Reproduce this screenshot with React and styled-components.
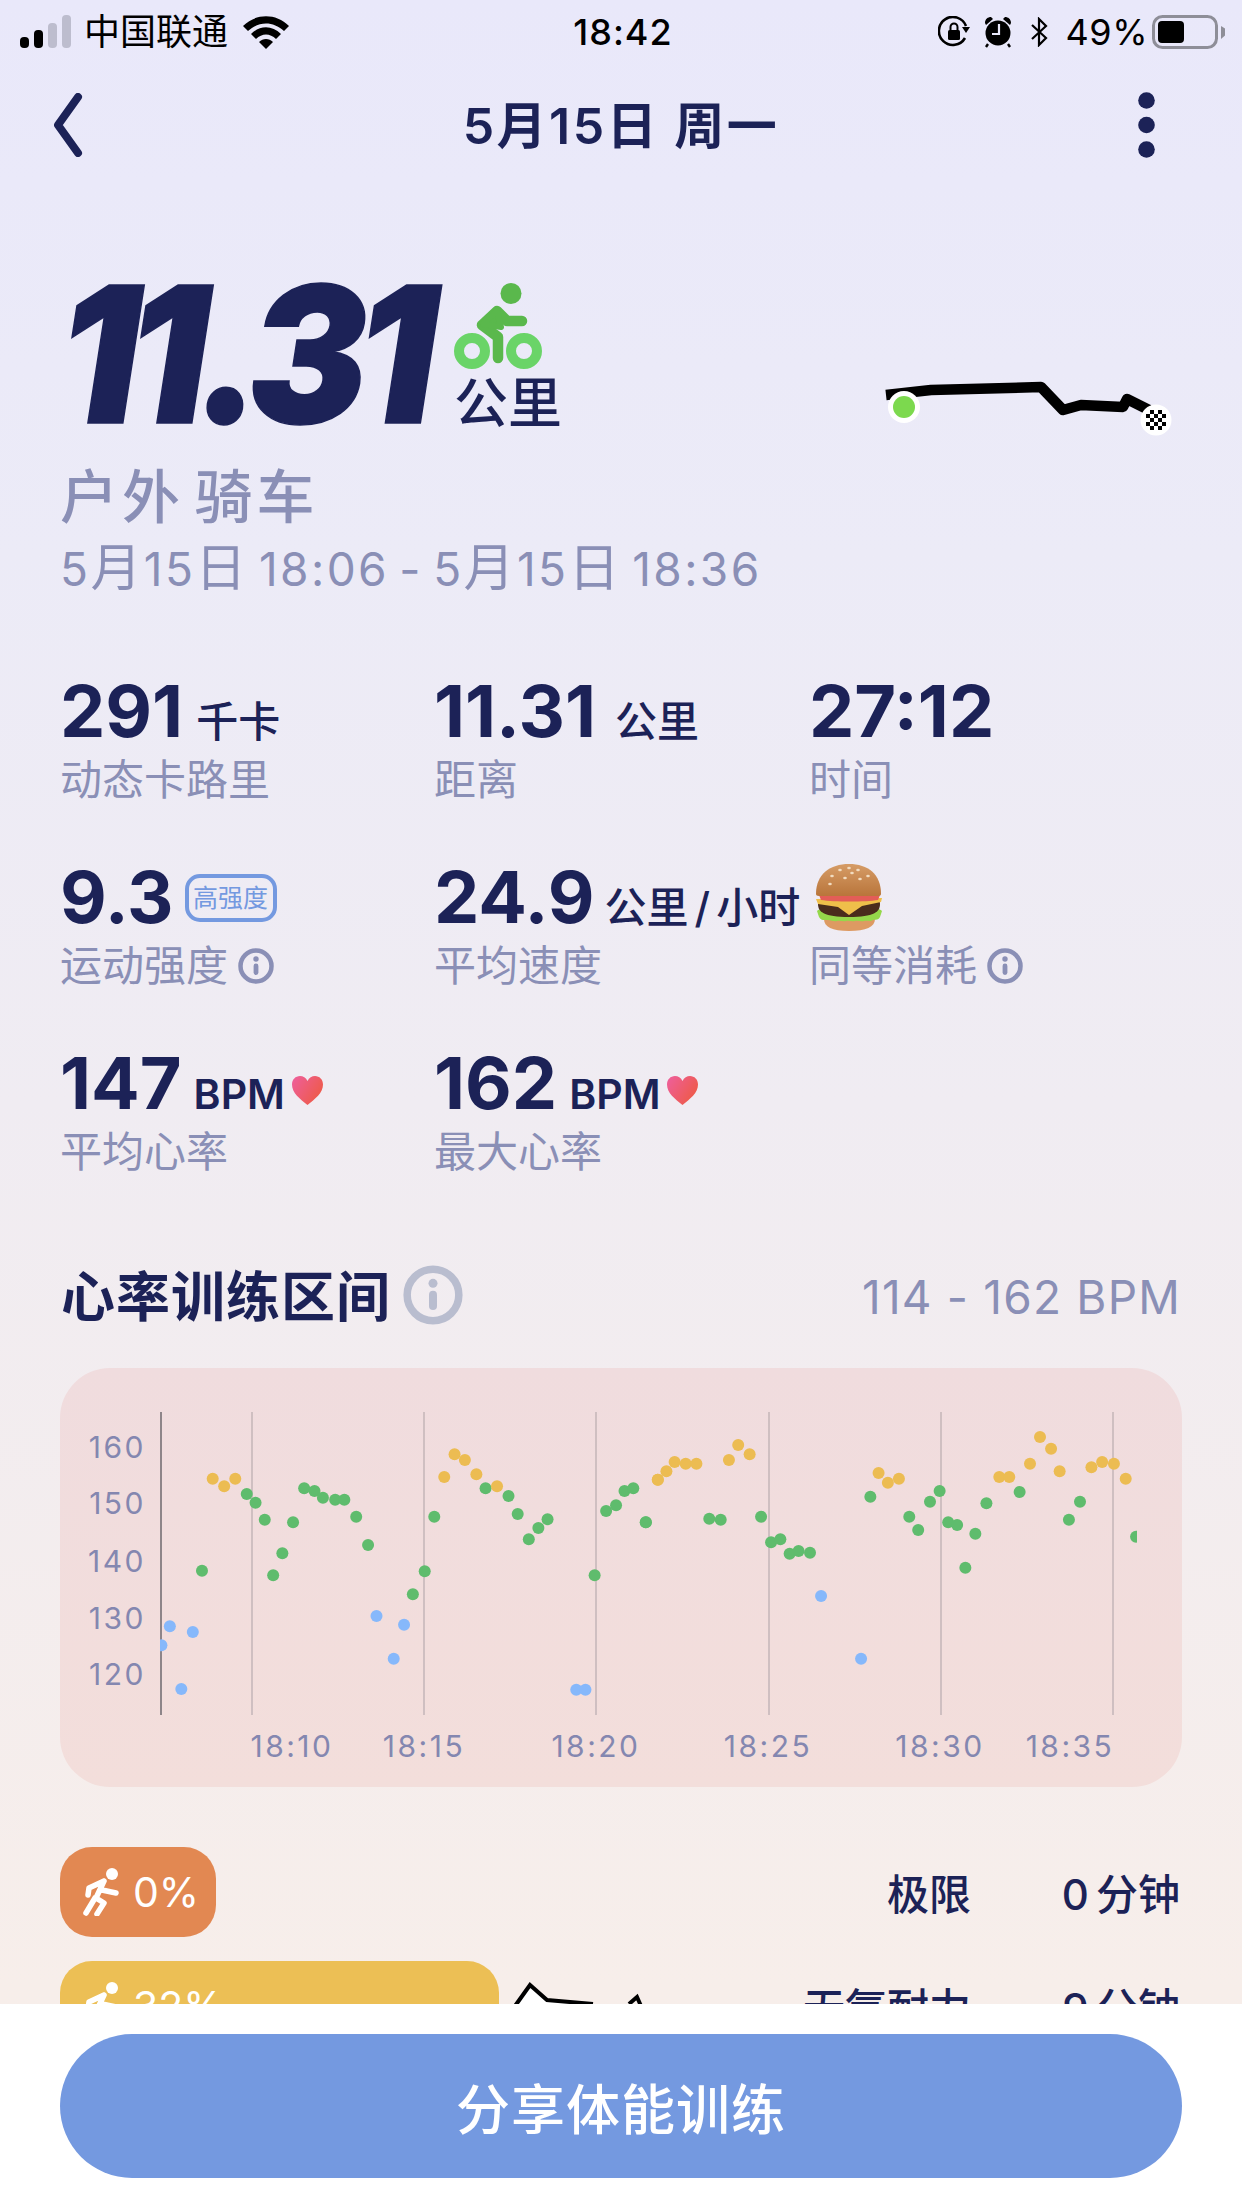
import React from "react";
import styled, { createGlobalStyle } from "styled-components";

const NAVY = "#1c2257";
const MUTED = "#8a8fb6";
const SANS = `Inter, "Noto Sans CJK SC", sans-serif`;

const Global = createGlobalStyle`
  html, body { margin: 0; padding: 0; background: #fff; }
  * { box-sizing: border-box; }
  body { font-family: ${SANS}; }
`;

const Page = styled.div`
  position: relative;
  width: 1242px;
  height: 2208px;
  overflow: hidden;
  background: linear-gradient(180deg, #e9e8fa 0%, #ecebf7 25%, #f0ecf2 50%, #f7eeea 90%);
`;

/* status bar */
const StatusBar = styled.div`
  display: grid;
  grid-template-columns: 1fr auto 1fr;
  align-items: center;
  height: 64px;
  padding: 0 16px 0 20px;
  color: #000;
  font-size: 36px;
  line-height: 64px;
`;
const StatusLeft = styled.div`
  display: flex;
  align-items: center;
  gap: 12px;
`;
const StatusRight = styled.div`
  display: flex;
  align-items: center;
  justify-content: flex-end;
  gap: 18px;
`;
const StatusTime = styled.div`
  font-weight: 500;
  font-size: 36px;
  letter-spacing: 1px;
`;
const Carrier = styled.span`
  font-size: 36px;
  margin-right: 2px;
`;
const Percent = styled.span`
  letter-spacing: 0.5px;
`;
const LockIcon = styled.svg`
  margin-right: -4px;
`;
const BatteryIcon = styled.svg`
  margin-left: -14px;
`;

/* nav */
const NavBar = styled.div`
  display: flex;
  align-items: center;
  justify-content: space-between;
  height: 122px;
  padding: 0 87px 0 47px;
`;
const NavTitle = styled.div`
  margin: -6px 0 0 21px;
  font-size: 50px;
  font-weight: 600;
  letter-spacing: 2.5px;
  color: ${NAVY};
`;

/* hero */
const Hero = styled.div`
  display: flex;
  align-items: flex-end;
  height: 172px;
  margin-top: 82px;
  padding-left: 59px;
`;
const BigNumber = styled.div`
  width: 380px;
  font-size: 190px;
  line-height: 172px;
  font-weight: 900;
  font-style: italic;
  letter-spacing: -12px;
  white-space: nowrap;
  color: ${NAVY};
  -webkit-text-stroke: 1.5px ${NAVY};
  transform: scaleX(0.935);
  transform-origin: left center;
`;
const HeroUnit = styled.div`
  display: flex;
  flex-direction: column;
  margin: 0 0 7px 15px;
`;
const HeroUnitText = styled.div`
  margin-top: 6px;
  font-size: 54px;
  line-height: 58px;
  font-weight: 500;
  color: ${NAVY};
`;
const Route = styled.svg`
  margin-left: auto;
  margin-right: 65px;
  margin-bottom: -2px;
  overflow: visible;
`;
const ActivityName = styled.div`
  margin: 19px 0 0 60px;
  font-size: 58px;
  line-height: 76px;
  font-weight: 500;
  letter-spacing: 4px;
  word-spacing: -9px;
  color: ${MUTED};
`;
const ActivityTime = styled.div`
  margin: 3px 0 0 60px;
  font-size: 46px;
  line-height: 60px;
  letter-spacing: 2.4px;
  word-spacing: -5px;
  color: ${MUTED};
`;
const DateGlyph = styled.span`
  font-size: 51px;
`;

/* stats */
const StatGrid = styled.div`
  display: grid;
  grid-template-columns: 374px 375px 1fr;
  grid-auto-rows: 186px;
  margin-top: 77px;
  padding-left: 60px;
`;
const Stat = styled.div`
  display: flex;
  flex-direction: column;
`;
const StatValue = styled.div`
  display: flex;
  align-items: baseline;
  height: 70px;
  line-height: 70px;
  font-size: 72px;
  font-weight: 700;
  color: ${NAVY};
  white-space: nowrap;
`;
const StatUnit = styled.span`
  margin-left: ${(p) => p.$gap ?? 13}px;
  font-size: ${(p) => p.$size ?? 42}px;
  font-weight: ${(p) => p.$weight ?? 500};
  word-spacing: -5px;
`;
const StatLabel = styled.div`
  display: flex;
  align-items: center;
  gap: 10px;
  height: 50px;
  margin-top: 9px;
  font-size: 42px;
  line-height: 50px;
  color: ${MUTED};
`;
const Badge = styled.span`
  align-self: center;
  display: inline-flex;
  align-items: center;
  justify-content: center;
  width: 92px;
  height: 48px;
  margin: 2px 0 0 11px;
  border: 4px solid #7499e0;
  border-radius: 15px;
  font-size: 25px;
  line-height: 1;
  font-weight: 400;
  color: #7499e0;
`;
const HeartIcon = styled.svg`
  align-self: center;
  margin: 14px 0 0 7px;
`;
const Burger = styled.svg`
  align-self: flex-start;
  margin: 2px 0 0 7px;
`;

/* section */
const SectionHead = styled.div`
  display: flex;
  align-items: center;
  height: 60px;
  margin-top: 31px;
  padding: 0 61px 0 61px;
`;
const SectionTitle = styled.div`
  margin-top: -3px;
  font-size: 54px;
  font-weight: 600;
  letter-spacing: 1px;
  color: ${NAVY};
`;
const SectionRange = styled.div`
  margin: 3px 0 0 auto;
  font-size: 46px;
  letter-spacing: 1.2px;
  color: ${MUTED};
`;
const SectionInfo = styled.span`
  display: flex;
  margin-left: 12px;
`;
const ChartCard = styled.div`
  height: 419px;
  margin: 43px 60px 0;
  border-radius: 50px;
  overflow: hidden;
  background: linear-gradient(180deg, #f0dcde 0%, #f3dedb 100%);
`;
const ChartSvg = styled.svg`
  display: block;
`;
const ChartText = styled.text`
  font-family: ${SANS};
  font-size: 30px;
  letter-spacing: 2.5px;
  fill: #8487b0;
`;

/* zones */
const ZoneList = styled.div`
  display: flex;
  flex-direction: column;
  gap: 24px;
  margin-top: 60px;
`;
const ZoneRow = styled.div`
  display: flex;
  align-items: center;
  height: 90px;
  padding: 0 62px 0 60px;
`;
const ZoneBar = styled.div`
  display: flex;
  align-items: center;
  gap: 12px;
  height: 90px;
  padding-left: 23px;
  border-radius: 32px;
  font-size: 41px;
  color: #fff;
  background: ${(p) => p.$color};
`;
const ZoneSketch = styled.svg`
  align-self: flex-start;
  margin: 1px 0 0 15px;
  overflow: visible;
`;
const ZoneName = styled.div`
  margin: -2px 0 0 auto;
  font-size: 42px;
  font-weight: 500;
  color: ${NAVY};
`;
const ZoneTime = styled.div`
  width: 209px;
  margin-top: -2px;
  text-align: right;
  font-size: 42px;
  font-weight: 500;
  word-spacing: -4px;
  color: ${NAVY};
`;

/* footer */
const Footer = styled.div`
  position: absolute;
  left: 0;
  right: 0;
  bottom: 0;
  height: 204px;
  padding: 30px 60px 0;
  background: #fff;
`;
const ShareButton = styled.button`
  display: block;
  width: 1122px;
  height: 144px;
  border: 0;
  border-radius: 72px;
  font-family: ${SANS};
  font-size: 54px;
  font-weight: 500;
  letter-spacing: 1px;
  color: #fff;
  background: #7499e0;
`;

/* icons */
const Signal = () => (
  <svg width="52" height="34" viewBox="0 0 52 34">
    <rect x="0" y="22" width="9" height="11" rx="4" fill="#000" />
    <rect x="14" y="15" width="9" height="18" rx="4" fill="#000" />
    <rect x="28" y="8" width="9" height="25" rx="4" fill="#bdbdce" />
    <rect x="42" y="0" width="9" height="33" rx="4" fill="#bdbdce" />
  </svg>
);
const Wifi = () => (
  <svg width="48" height="34" viewBox="0 0 48 34">
    <path d="M1 11C14 -2 34 -2 47 11L42 16C31 6 17 6 6 16Z" fill="#000" />
    <path d="M9 19C18 10 30 10 39 19L34 24C28 18 20 18 14 24Z" fill="#000" />
    <path d="M17 27C21 23 27 23 31 27L24 34Z" fill="#000" />
  </svg>
);
const RotationLock = () => (
  <LockIcon width="32" height="32" viewBox="0 0 32 32">
    <path d="M27 22A14 14 0 1 1 28 10" fill="none" stroke="#000" strokeWidth="2.6" />
    <path d="M24 11H32L28 17Z" fill="#000" />
    <rect x="10" y="14" width="12" height="10" rx="1.5" fill="#000" />
    <path d="M12.5 14V11A3.5 3.5 0 0 1 19.5 11V14" fill="none" stroke="#000" strokeWidth="2" />
  </LockIcon>
);
const Alarm = () => (
  <svg width="28" height="32" viewBox="0 0 28 32">
    <circle cx="14" cy="17" r="12.5" fill="#000" />
    <path d="M1 7C1 3 4 1 7 1L9 3L2 9Z M27 7C27 3 24 1 21 1L19 3L26 9Z" fill="#000" />
    <path d="M4 28L2 31M24 28L26 31" stroke="#000" strokeWidth="2.4" />
    <path d="M15 8V18H8" fill="none" stroke="#e9e8fa" strokeWidth="2.2" />
  </svg>
);
const Bluetooth = () => (
  <svg width="18" height="30" viewBox="0 0 18 30">
    <path d="M2 8L16 21L9 28V2L16 9L2 22" fill="none" stroke="#000" strokeWidth="2.2" />
  </svg>
);
const Battery = () => (
  <BatteryIcon width="74" height="34" viewBox="0 0 74 34">
    <rect x="1.5" y="1.5" width="63" height="31" rx="9" fill="none" stroke="#8e8e98" strokeWidth="3" />
    <rect x="6" y="6" width="26" height="22" rx="4" fill="#000" />
    <path d="M69 11L73 13.5V20.5L69 24Z" fill="#8e8e98" />
  </BatteryIcon>
);
const Chevron = () => (
  <svg width="36" height="64" viewBox="0 0 36 64">
    <path d="M31 4L11 32L31 60" fill="none" stroke={NAVY} strokeWidth="8" strokeLinecap="round" strokeLinejoin="round" />
  </svg>
);
const Dots = () => (
  <svg width="17" height="66" viewBox="0 0 17 66">
    <circle cx="8.5" cy="8.5" r="8.3" fill={NAVY} />
    <circle cx="8.5" cy="33" r="8.3" fill={NAVY} />
    <circle cx="8.5" cy="57.5" r="8.3" fill={NAVY} />
  </svg>
);
const Cyclist = () => (
  <svg width="88" height="86" viewBox="0 0 88 86" style={{ display: "block" }}>
    <circle cx="57" cy="10.5" r="10.5" fill="#5ab84c" />
    <circle cx="18" cy="68" r="13" fill="none" stroke="#6ad468" strokeWidth="10" />
    <circle cx="70" cy="68" r="13" fill="none" stroke="#6ad468" strokeWidth="10" />
    <path d="M44 75V54L28 42L43 28L53 38H68" fill="none" stroke="#5ab84c" strokeWidth="10.5" strokeLinecap="round" strokeLinejoin="round" />
    <path d="M29 41L43 28L47 44Z" fill="#5ab84c" stroke="#5ab84c" strokeWidth="6" strokeLinejoin="round" />
  </svg>
);
const RouteMap = () => (
  <Route width="296" height="60" viewBox="880 380 296 60">
    <path d="M885 393L930 388L1040 385L1062 408L1080 403L1122 405L1126 397L1148 408" fill="none" stroke="#000" strokeWidth="10.5" strokeLinejoin="round" />
    <circle cx="903" cy="405" r="16" fill="#fff" />
    <circle cx="903" cy="405" r="11" fill="#7cd94e" />
    <circle cx="1155" cy="418" r="15.5" fill="#fff" />
    {[[-8,-4],[-8,4],[-4,-8],[-4,0],[-4,8],[0,-4],[0,4],[4,-8],[4,0],[4,8],[8,-4],[8,4]].map(([x, y]) => (
      <rect key={`${x}${y}`} x={1153 + x} y={416 + y} width="4" height="4" fill="#000" />
    ))}
  </Route>
);
const Info = ({ size = 36, color = MUTED }) => (
  <svg width={size} height={size} viewBox="0 0 36 36">
    <circle cx="18" cy="18" r="15.5" fill="none" stroke={color} strokeWidth="4.5" />
    <circle cx="18" cy="11" r="2.7" fill={color} />
    <rect x="15.6" y="15.5" width="4.8" height="11.5" rx="2.4" fill={color} />
  </svg>
);
const Heart = ({ id }) => (
  <HeartIcon width="31" height="29" viewBox="0 0 31 29">
    <defs>
      <linearGradient id={id} x1="0" y1="0" x2="1" y2="0.6">
        <stop offset="0" stopColor="#ee5f9e" />
        <stop offset="1" stopColor="#ee5a48" />
      </linearGradient>
    </defs>
    <path d="M15.5 29C8 23 0 17 0 8.5C0 3.5 3.5 0 8 0C11 0 14 1.5 15.5 5C17 1.5 20 0 23 0C27.5 0 31 3.5 31 8.5C31 17 23 23 15.5 29Z" fill={`url(#${id})`} />
  </HeartIcon>
);
const BurgerIcon = () => (
  <Burger width="67" height="67" viewBox="0 0 67 67">
    <defs>
      <linearGradient id="bun" x1="0" y1="0" x2="0" y2="1">
        <stop offset="0" stopColor="#d69c66" />
        <stop offset="1" stopColor="#b9753b" />
      </linearGradient>
    </defs>
    <path d="M8 55C8 63 16 67 33 67C50 67 59 63 59 55Z" fill="#dd9a62" />
    <path d="M1 47C3 45 5 45 8 46H59C62 45 64 45 66 47L64 53C62 57 60 55 57 56C54 58 51 56 48 57C45 58 42 56 39 57C36 58 33 56 30 57C27 58 24 56 21 57C18 58 15 56 12 56C8 56 5 57 3 53Z" fill="#95d84a" />
    <path d="M2 40C2 34 8 34 33 34C58 34 64 34 64 40C64 48 58 53 33 53C8 53 2 48 2 40Z" fill="#4a2c1c" />
    <path d="M0 35L66 34L65 38L46 42L33 51L22 43L2 40Z" fill="#efbf4a" />
    <path d="M3 31H64L62 36C50 38 18 38 5 36Z" fill="#e35d57" />
    <path d="M0 30C0 10 14 0 33 0C52 0 65 10 65 30C65 31 64 32 62 32H3C1 32 0 31 0 30Z" fill="url(#bun)" />
    {[[16,12],[24,6],[33,4],[42,6],[52,12],[29,14],[44,15],[14,20],[36,9]].map(([x, y]) => (
      <ellipse key={`${x}-${y}`} cx={x} cy={y} rx="1.8" ry="1.2" fill="#f1dcc0" />
    ))}
  </Burger>
);
const Runner = ({ width = 38, height = 48 }) => (
  <svg width={width} height={height} viewBox="0 0 38 48">
    <circle cx="29" cy="6" r="6" fill="#fff" />
    <path d="M21 13L6 20L5 27M21 13L13 30L21 35L14 46M19 22L33 25M12 30L3 45" fill="none" stroke="#fff" strokeWidth="5.5" strokeLinecap="round" strokeLinejoin="round" />
  </svg>
);

/* chart data, in the picture's pixel coordinates */
const fromLeft = (pts) => pts.map(([x, y]) => [60 + x / 2.613, 1370 + y / 3]);
const fromRight = (pts) => pts.map(([x, y]) => [640 + x / 2.8, 1370 + y / 3]);
const BLUE = [
  ...fromLeft([[265,829],[287,772],[317,960],[347,789],[827,741],[872,869],[899,767],[1349,962],[1373,962]]),
  ...fromRight([[507,681],[619,869]]),
];
const GREEN = [
  ...fromLeft([[371,605],[488,375],[511,401],[535,452],[557,619],[581,553],[609,460],[638,358],[665,366],[687,386],[719,392],[743,392],[774,443],[805,528],[922,676],[953,607],[978,443],[1112,358],[1172,381],[1196,435],[1225,511],[1250,477],[1274,451],[1397,619],[1427,426],[1453,409],[1475,366],[1498,358],[1531,460]]),
  ...fromRight([[16,460],[194,449],[226,452],[339,443],[367,520],[393,511],[419,554],[444,546],[476,551],[645,383],[754,443],[779,483],[812,398],[839,366],[863,460],[888,468],[911,596],[939,494],[970,403],[1063,369],[1201,452],[1232,398],[1389,503]]),
];
const YELLOW = [
  ...fromLeft([[399,329],[429,352],[458,329],[1004,324],[1031,256],[1058,273],[1088,316],[1142,352],[1562,332]]),
  ...fromRight([[50,332],[74,307],[97,279],[128,284],[158,284],[249,273],[275,228],[307,256],[668,312],[694,341],[725,329],[1006,324],[1034,324],[1092,284],[1120,204],[1151,239],[1175,307],[1264,295],[1294,279],[1327,284],[1360,329]]),
];
const GRID = [252, 424, 596, 769, 941, 1113];
const Y_LABELS = [["160", 1447], ["150", 1503], ["140", 1561], ["130", 1618], ["120", 1674]];
const X_LABELS = [["18:10", 292], ["18:15", 424], ["18:20", 596], ["18:25", 768], ["18:30", 940], ["18:35", 1070]];

const Chart = () => (
  <ChartSvg width="1122" height="419" viewBox="60 1369 1122 419">
    <defs>
      <clipPath id="plot">
        <rect x="160" y="1400" width="977" height="330" />
      </clipPath>
    </defs>
    <line x1="161" x2="161" y1="1413" y2="1716" stroke="#8e8589" strokeWidth="2" />
    {GRID.map((x) => (
      <line key={x} x1={x} x2={x} y1="1413" y2="1716" stroke="#cfbfc1" strokeWidth="2" />
    ))}
    <g clipPath="url(#plot)">
      {BLUE.map(([x, y], i) => <circle key={i} cx={x} cy={y} r="6" fill="#86b8fb" />)}
      {GREEN.map(([x, y], i) => <circle key={i} cx={x} cy={y} r="6" fill="#5fbc6d" />)}
      {YELLOW.map(([x, y], i) => <circle key={i} cx={x} cy={y} r="6" fill="#ecbc52" />)}
    </g>
    {Y_LABELS.map(([t, y]) => (
      <ChartText key={t} x="146" y={y + 12} textAnchor="end">{t}</ChartText>
    ))}
    {X_LABELS.map(([t, x]) => (
      <ChartText key={t} x={x} y="1758" textAnchor="middle">{t}</ChartText>
    ))}
  </ChartSvg>
);

export default function App() {
  return (
    <Page>
      <Global />
      <StatusBar>
        <StatusLeft>
          <Signal />
          <Carrier>中国联通</Carrier>
          <Wifi />
        </StatusLeft>
        <StatusTime>18:42</StatusTime>
        <StatusRight>
          <RotationLock />
          <Alarm />
          <Bluetooth />
          <Percent>49%</Percent>
          <Battery />
        </StatusRight>
      </StatusBar>

      <NavBar>
        <Chevron />
        <NavTitle>5月15日 周一</NavTitle>
        <Dots />
      </NavBar>

      <Hero>
        <BigNumber>11.31</BigNumber>
        <HeroUnit>
          <Cyclist />
          <HeroUnitText>公里</HeroUnitText>
        </HeroUnit>
        <RouteMap />
      </Hero>
      <ActivityName>户外 骑车</ActivityName>
      <ActivityTime>
        5<DateGlyph>月</DateGlyph>15<DateGlyph>日</DateGlyph> 18:06 - 5<DateGlyph>月</DateGlyph>15<DateGlyph>日</DateGlyph> 18:36
      </ActivityTime>

      <StatGrid>
        <Stat>
          <StatValue>291<StatUnit>千卡</StatUnit></StatValue>
          <StatLabel>动态卡路里</StatLabel>
        </Stat>
        <Stat>
          <StatValue>11.31<StatUnit $gap={19}>公里</StatUnit></StatValue>
          <StatLabel>距离</StatLabel>
        </Stat>
        <Stat>
          <StatValue>27:12</StatValue>
          <StatLabel>时间</StatLabel>
        </Stat>
        <Stat>
          <StatValue>9.3<Badge>高强度</Badge></StatValue>
          <StatLabel>运动强度<Info /></StatLabel>
        </Stat>
        <Stat>
          <StatValue>24.9<StatUnit $gap={10}>公里 / 小时</StatUnit></StatValue>
          <StatLabel>平均速度</StatLabel>
        </Stat>
        <Stat>
          <StatValue><BurgerIcon /></StatValue>
          <StatLabel>同等消耗<Info /></StatLabel>
        </Stat>
        <Stat>
          <StatValue>147<StatUnit $size={41} $weight={600} $gap={12}>BPM</StatUnit><Heart id="h1" /></StatValue>
          <StatLabel>平均心率</StatLabel>
        </Stat>
        <Stat>
          <StatValue>162<StatUnit $size={41} $weight={600} $gap={12}>BPM</StatUnit><Heart id="h2" /></StatValue>
          <StatLabel>最大心率</StatLabel>
        </Stat>
      </StatGrid>

      <SectionHead>
        <SectionTitle>心率训练区间</SectionTitle>
        <SectionInfo><Info size={60} color="#b9bdcf" /></SectionInfo>
        <SectionRange>114 - 162 BPM</SectionRange>
      </SectionHead>
      <ChartCard><Chart /></ChartCard>

      <ZoneList>
        <ZoneRow>
          <ZoneBar $color="#e28852" style={{ width: 156 }}>
            <Runner />
            <span>0%</span>
          </ZoneBar>
          <ZoneName>极限</ZoneName>
          <ZoneTime>0 分钟</ZoneTime>
        </ZoneRow>
        <ZoneRow>
          <ZoneBar $color="#ecbf55" style={{ width: 439 }}>
            <Runner />
            <span>32%</span>
          </ZoneBar>
          <ZoneSketch width="130" height="60" viewBox="511 1962 130 60">
            <path d="M512 2006L527 1985L544 2000L590 2004" fill="#fff" stroke="#000" strokeWidth="4" />
            <path d="M626 2004L634 1997L638 2006" fill="none" stroke="#000" strokeWidth="4" />
          </ZoneSketch>
          <ZoneName>无氧耐力</ZoneName>
          <ZoneTime>9 分钟</ZoneTime>
        </ZoneRow>
      </ZoneList>

      <Footer>
        <ShareButton>分享体能训练</ShareButton>
      </Footer>
    </Page>
  );
}
